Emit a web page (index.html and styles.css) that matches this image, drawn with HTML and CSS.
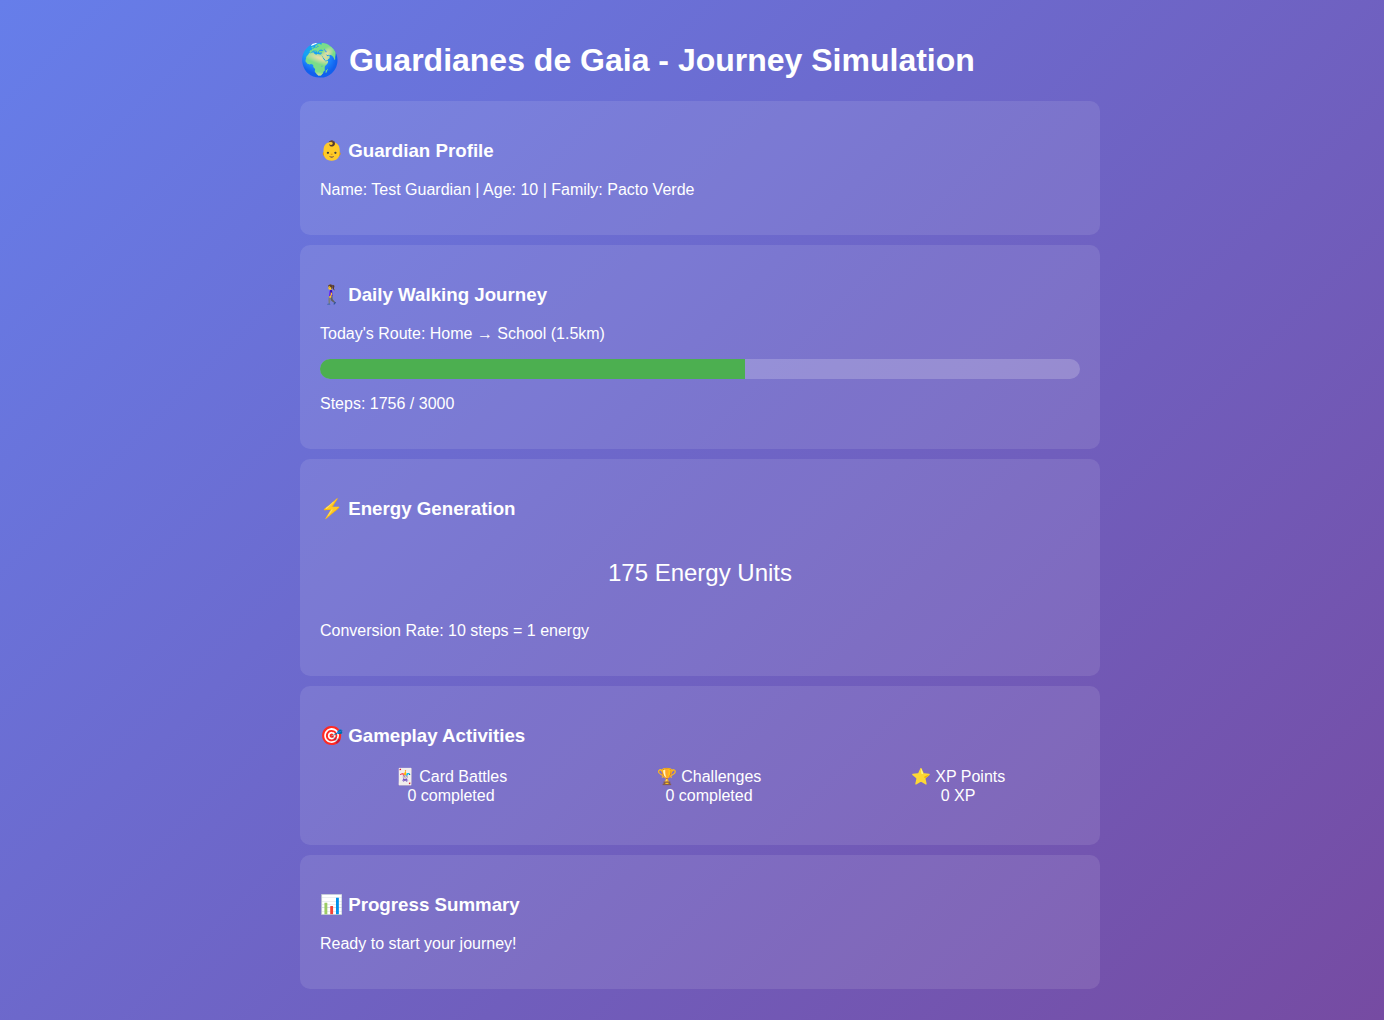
FILE: index.html
```html
<!DOCTYPE html>
<html lang="en">
<head>
<meta charset="utf-8">
<meta name="viewport" content="width=device-width, initial-scale=1">
<title>Guardianes de Gaia - Journey Simulation</title>
<link rel="stylesheet" href="styles.css">
</head>
<body>
<main class="container">
  <h1>🌍 Guardianes de Gaia - Journey Simulation</h1>

  <section class="card">
    <h3 class="card-title">👶 Guardian Profile</h3>
    <p>Name: Test Guardian | Age: 10 | Family: Pacto Verde</p>
  </section>

  <section class="card">
    <h3 class="card-title">🚶‍♀️ Daily Walking Journey</h3>
    <p>Today's Route: Home → School (1.5km)</p>
    <div class="progress" role="progressbar" aria-label="Steps" aria-valuemin="0" aria-valuemax="3000" aria-valuenow="1756">
      <div class="progress-fill" style="width: 55.9%"></div>
    </div>
    <p>Steps: 1756 / 3000</p>
  </section>

  <section class="card">
    <h3 class="card-title">⚡ Energy Generation</h3>
    <div class="energy">175 Energy Units</div>
    <p>Conversion Rate: 10 steps = 1 energy</p>
  </section>

  <section class="card">
    <h3 class="card-title">🎯 Gameplay Activities</h3>
    <div class="activities">
      <div class="activity">
        <div>🃏 Card Battles</div>
        <div>0 completed</div>
      </div>
      <div class="activity">
        <div>🏆 Challenges</div>
        <div>0 completed</div>
      </div>
      <div class="activity">
        <div>⭐ XP Points</div>
        <div>0 XP</div>
      </div>
    </div>
  </section>

  <section class="card">
    <h3 class="card-title">📊 Progress Summary</h3>
    <p>Ready to start your journey!</p>
  </section>
</main>
</body>
</html>
```

FILE: styles.css
```css
* {
  box-sizing: border-box;
}

html {
  min-height: 100%;
  background: linear-gradient(135deg, #667eea, #764ba2);
}

body {
  margin: 0;
  padding: 20px 20px 20px 36px;
  color: #fff;
  font-family: "Liberation Sans", Arial, sans-serif;
  font-size: 16px;
}

.container {
  max-width: 800px;
  margin: 0 auto;
}

.card {
  margin: 10px 0;
  padding: 20px;
  border-radius: 10px;
  background: rgba(255, 255, 255, 0.1);
}

.card-title {
  margin: 19px 0;
  line-height: 22px;
}

.progress {
  height: 20px;
  overflow: hidden;
  border-radius: 10px;
  background: rgba(255, 255, 255, 0.2);
}

.progress-fill {
  height: 100%;
  background: #4caf50;
}

.energy {
  padding: 20px;
  font-size: 24px;
  line-height: 27px;
  text-align: center;
}

.activities {
  display: flex;
  justify-content: space-around;
  margin: 20px 0;
  line-height: 19px;
  text-align: center;
}
```
